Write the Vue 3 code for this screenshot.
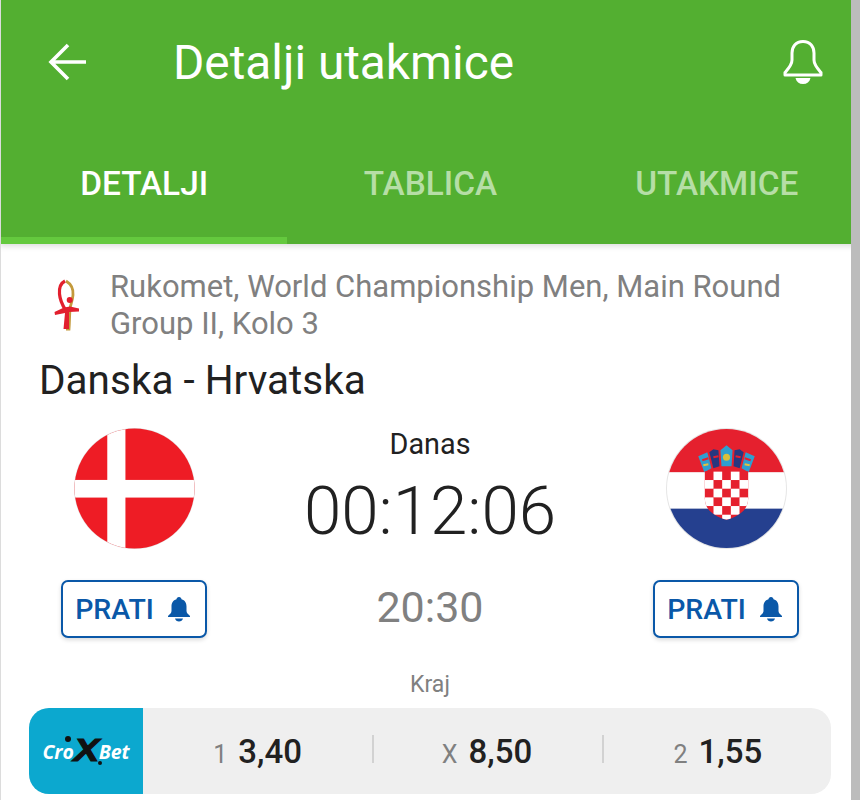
<template>
  <div class="screen">
    <header class="header">
      <div class="toolbar">
        <svg class="back" viewBox="0 0 40 40" width="40" height="40">
          <path d="M3 20H38M20 3L3 20L20 37" fill="none" stroke="#fff" stroke-width="3.6" />
        </svg>
        <h1 class="title">Detalji utakmice</h1>
        <svg class="notify" viewBox="0 0 40 46" width="40" height="46">
          <path d="M20 2.500C12.500 2.500 9 8 9 14V21C9 26 5 30 2 33.500V36H38V33.500C35 30 31 26 31 21V14C31 8 27.500 2.500 20 2.500Z" fill="none" stroke="#fff" stroke-width="3" stroke-linejoin="round" />
          <path d="M12.500 39H27.500C26.500 43 24 45 20 45C16 45 13.500 43 12.500 39Z" fill="#fff" />
        </svg>
      </div>
      <nav class="tabs">
        <div v-for="(tab, i) in tabs" :key="tab" class="tab" :class="{ active: i === 0 }">{{ tab }}</div>
      </nav>
    </header>

    <main class="content">
      <div class="league">
        <svg class="league-icon" viewBox="0 0 26 52" width="26" height="52">
          <path d="M12 2C17 5 19.500 10 19 16C18.500 22 16.500 25 16 30C15.500 36 15.500 44 15 50H12" fill="none" stroke="#c39a3c" stroke-width="2.800" />
          <path d="M11 2C7 4 5 9 5.500 15C6 21 9 27 11.500 31" fill="none" stroke="#e21f2d" stroke-width="3.200" />
          <circle cx="15.700" cy="21" r="3" fill="#e21f2d" />
          <path d="M0.500 33L10 28.500L16 27.500L25 29.500L25 32.500L15 33V50H9.500L11 34L1 36Z" fill="#e21f2d" />
        </svg>
        <p class="league-name">Rukomet, World Championship Men, Main Round Group II, Kolo 3</p>
      </div>

      <h2 class="match-name">Danska - Hrvatska</h2>

      <section class="match">
        <div class="team">
          <svg class="flag" viewBox="0 0 120 120" width="121" height="121">
            <defs>
              <clipPath id="round-dk"><circle cx="60" cy="60" r="59.500" /></clipPath>
            </defs>
            <circle cx="60" cy="60" r="60" fill="#e2e2e2" />
            <g clip-path="url(#round-dk)">
              <rect width="120" height="120" fill="#ee1c25" />
              <rect x="33" width="18" height="120" fill="#fff" />
              <rect y="51.500" width="120" height="17.500" fill="#fff" />
            </g>
          </svg>
          <button class="follow">PRATI <svg viewBox="0 0 24 26" width="24" height="26"><path :d="bellPath" fill="#0a58a8" /></svg></button>
        </div>

        <div class="center">
          <div class="day">Danas</div>
          <div class="countdown">00:12:06</div>
          <div class="kickoff">20:30</div>
        </div>

        <div class="team">
          <svg class="flag" viewBox="0 0 120 120" width="121" height="121">
            <defs>
              <clipPath id="round-hr"><circle cx="60" cy="60" r="59" /></clipPath>
              <clipPath id="shield"><path d="M38.500 43H81.500V70C81.500 82 71 88 60 91C49 88 38.500 82 38.500 70Z" /></clipPath>
            </defs>
            <circle cx="60" cy="60" r="60" fill="#e6e6e6" />
            <g clip-path="url(#round-hr)">
              <rect width="120" height="44" fill="#e5202e" />
              <rect y="44" width="120" height="36" fill="#fff" />
              <rect y="80" width="120" height="40" fill="#25408f" />
            </g>
            <path d="M32 28L41 24L45 40L38 44Z" fill="#2f9fd0" />
            <path d="M43 24L47 21L52 22L53 38L47 40Z" fill="#27377f" />
            <path d="M54 22L60 17L66 22L65 38H55Z" fill="#2f9fd0" />
            <path d="M68 22L73 21L77 24L73 40L67 38Z" fill="#27377f" />
            <path d="M79 24L88 28L82 44L75 40Z" fill="#2f9fd0" />
            <path d="M36 32L42 30M47 29L52 28M69 28L74 29M78 30L84 32" stroke="#e5202e" stroke-width="2.200" />
            <path d="M37 37L42 36M78 36L83 37" stroke="#e3c13c" stroke-width="2" />
            <circle cx="60" cy="29" r="3.500" fill="#d9c03c" />
            <path d="M38.500 43H81.500V70C81.500 82 71 88 60 91C49 88 38.500 82 38.500 70Z" fill="#e5202e" />
            <g fill="#fff" clip-path="url(#shield)">
              <rect v-for="(sq, i) in checks" :key="i" :x="sq.x" :y="sq.y" width="8.600" height="8.600" />
            </g>
          </svg>
          <button class="follow">PRATI <svg viewBox="0 0 24 26" width="24" height="26"><path :d="bellPath" fill="#0a58a8" /></svg></button>
        </div>
      </section>

      <div class="end">Kraj</div>

      <section class="odds">
        <div class="bookie">
          <span class="bookie-cro">Cro</span><span class="bookie-x">X</span><span class="bookie-bet">Bet</span>
          <i class="dot dot-top"></i>
          <i class="dot dot-bottom"></i>
        </div>
        <div v-for="odd in odds" :key="odd.label" class="odd">
          <span class="odd-label">{{ odd.label }}</span>
          <span class="odd-value">{{ odd.value }}</span>
        </div>
      </section>
    </main>
  </div>
</template>

<script setup>
const tabs = ['DETALJI', 'TABLICA', 'UTAKMICE']

const odds = [
  { label: '1', value: '3,40' },
  { label: 'X', value: '8,50' },
  { label: '2', value: '1,55' }
]

const bellPath = 'M12 1C10.500 1 9.500 2 9.500 3.300C6 4.300 4.500 7.300 4.500 10.500V15C4.500 17 2.500 18.500 1 20V21H23V20C21.500 18.500 19.500 17 19.500 15V10.500C19.500 7.300 18 4.300 14.500 3.300C14.500 2 13.500 1 12 1ZM8 22.500C8.500 24.500 10 25.500 12 25.500C14 25.500 15.500 24.500 16 22.500Z'

// bijela polja grba, sahovnica 5x5
const checks = []
for (let row = 0; row < 6; row++) {
  for (let col = 0; col < 5; col++) {
    if ((row + col) % 2 === 1) {
      checks.push({ x: 38.5 + col * 8.6, y: 43 + row * 8.6 })
    }
  }
}
</script>

<style scoped>
.screen {
  width: 860px;
  height: 800px;
  overflow: hidden;
  background: #fff;
  font-family: Roboto, "Liberation Sans", sans-serif;
  border-right: 9px solid #bcbcbc;
  border-left: 1px solid #dcdcdc;
  box-sizing: border-box;
  position: relative;
}

.header {
  height: 244px;
  margin: 0 -9px 0 -1px;
  background: #53af31;
  border-left: 1px solid #3f7f27;
  display: flex;
  flex-direction: column;
  box-shadow: 0 2px 6px rgba(0, 0, 0, 0.15);
  position: relative;
}

.toolbar {
  display: flex;
  align-items: center;
  height: 124px;
  padding: 0 37px 0 47px;
}

.title {
  flex: 1;
  margin: 2px 0 0 85px;
  color: #fff;
  font-size: 47.800px;
  font-weight: 400;
  white-space: nowrap;
}

.tabs {
  flex: 1;
  display: grid;
  grid-template-columns: repeat(3, 1fr);
}

.tab {
  display: flex;
  align-items: center;
  justify-content: center;
  height: 113px;
  box-sizing: border-box;
  padding-top: 5px;
  color: #b6dea6;
  font-size: 33.400px;
  font-weight: 500;
}

.tab.active {
  color: #fff;
  border-bottom: 7px solid #64c93e;
  height: 120px;
}

.content {
  padding: 24px 0 0;
}

.league {
  display: flex;
  align-items: center;
  padding-left: 53px;
}

.league-icon {
  flex: none;
}

.league-name {
  margin: 0 0 0 30px;
  width: 720px;
  color: #808080;
  font-size: 31px;
  line-height: 37px;
}

.match-name {
  margin: 14px 0 0 38px;
  color: #212121;
  font-size: 40.500px;
  line-height: 48px;
  font-weight: 400;
}

.match {
  display: grid;
  grid-template-columns: 214px 1fr 214px;
  margin: 24px 18px 0 26px;
}

.team {
  display: flex;
  flex-direction: column;
  align-items: center;
  gap: 31px;
}

.flag {
  display: block;
}

.follow {
  display: flex;
  align-items: center;
  justify-content: center;
  gap: 13px;
  width: 146px;
  height: 58px;
  padding: 0 2px 0 0;
  background: #fff;
  border: 2.500px solid #0a58a8;
  border-radius: 7px;
  box-shadow: 0 2px 4px rgba(0, 0, 0, 0.15);
  color: #0a58a8;
  font-family: inherit;
  font-size: 28.500px;
  font-weight: 500;
}

.center {
  display: flex;
  flex-direction: column;
  align-items: center;
}

.day {
  color: #212121;
  font-size: 28.800px;
  line-height: 32px;
}

.countdown {
  margin-top: 13px;
  color: #212121;
  font-size: 67.300px;
  line-height: 76px;
  font-weight: 300;
}

.kickoff {
  margin-top: 33px;
  color: #808080;
  font-size: 43px;
  line-height: 50px;
}

.end {
  margin-top: 33px;
  padding-left: 8px;
  text-align: center;
  color: #808080;
  font-size: 23px;
  line-height: 28px;
}

.odds {
  display: flex;
  align-items: center;
  height: 86px;
  margin: 9px 20px 0 28px;
  background: #efefef;
  border-radius: 20px;
  overflow: hidden;
}

.bookie {
  position: relative;
  flex: none;
  width: 114px;
  height: 86px;
  display: flex;
  align-items: center;
  justify-content: center;
  background: #0ca8cf;
  color: #fff;
  font-family: "Open Sans", sans-serif;
  font-size: 19.500px;
  font-weight: 700;
  font-style: italic;
}

.bookie-x {
  display: inline-block;
  color: #111;
  font-family: "Liberation Sans", sans-serif;
  font-size: 31px;
  font-weight: 700;
  margin: 0 2px;
  transform: scaleX(1.25);
  -webkit-text-stroke: 1px #111;
}

.dot {
  position: absolute;
  width: 6px;
  height: 6px;
  border-radius: 50%;
  background: #111;
}

.dot-top {
  left: 36px;
  top: 28px;
}

.dot-bottom {
  left: 69px;
  top: 53px;
  width: 4px;
  height: 4px;
}

.odd {
  position: relative;
  flex: 1;
  display: flex;
  align-items: baseline;
  justify-content: center;
  gap: 11px;
}

.odd:last-child .odd-label {
  margin-left: 3px;
}

.odd + .odd::before {
  content: "";
  position: absolute;
  left: 0;
  top: 3px;
  width: 2px;
  height: 28px;
  background: #d2d2d2;
}

.odd-label {
  color: #808080;
  font-size: 25px;
}

.odd-value {
  color: #212121;
  font-size: 33px;
  font-weight: 500;
}
</style>
<style>
html,
body {
  margin: 0;
  background: #fff;
}
</style>
